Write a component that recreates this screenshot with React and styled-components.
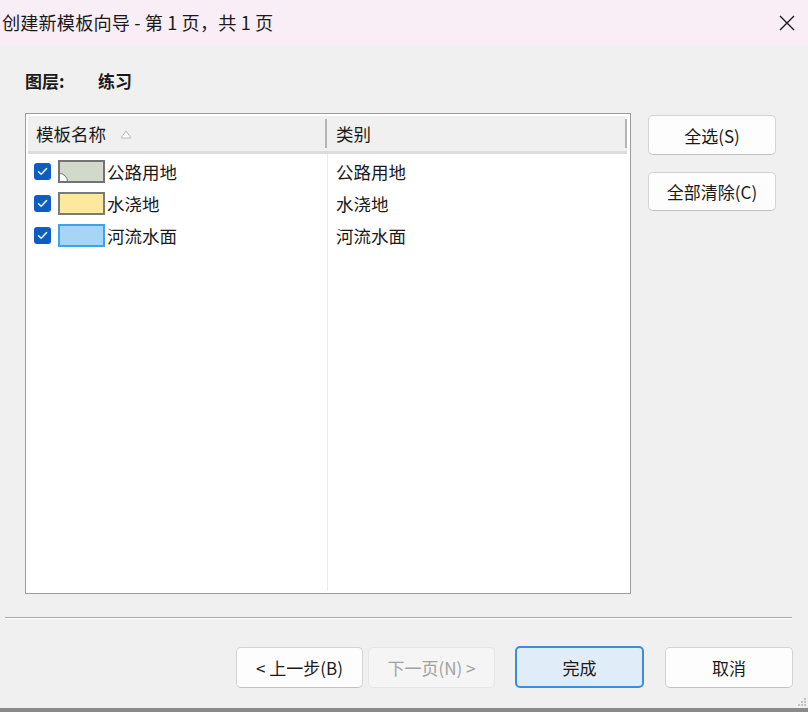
import styled, { createGlobalStyle } from 'styled-components';

const GlobalStyle = createGlobalStyle`
  html, body {
    margin: 0;
    padding: 0;
    width: 808px;
    height: 712px;
    overflow: hidden;
    background: #f0f0f0;
  }
  * {
    box-sizing: border-box;
  }
`;

const FONT = `"Noto Sans CJK SC", "Noto Sans", "Liberation Sans", sans-serif`;

const Window = styled.div`
  width: 808px;
  height: 712px;
  display: flex;
  flex-direction: column;
  background: #f0f0f0;
  font-family: ${FONT};
  color: #1a1a1a;
  border-bottom: 4px solid #8a8a8a;
  position: relative;
`;

const TitleBar = styled.div`
  height: 45px;
  flex: none;
  display: flex;
  align-items: center;
  justify-content: space-between;
  background: #f9eef6;
  padding: 0 12px 2px 2px;
`;

const Title = styled.div`
  font-size: 18.2px;
  letter-spacing: 0.1px;
`;

const CloseIcon = styled.svg`
  width: 18px;
  height: 18px;
  margin-top: 2px;
`;

const Body = styled.div`
  flex: 1;
  display: flex;
  flex-direction: column;
  padding: 22px 0 0 25px;
`;

const LayerRow = styled.div`
  display: flex;
  align-items: center;
  height: 26px;
  font-size: 17px;
  font-weight: 700;
`;

const LayerLabel = styled.span`
  width: 73px;
`;

const Main = styled.div`
  display: flex;
  margin-top: 20px;
  gap: 17px;
`;

const ListBox = styled.div`
  width: 606px;
  height: 481px;
  border: 1px solid #9c9c9c;
  box-shadow: inset 0 0 0 1px #ffffff;
  background: #ffffff;
  display: flex;
  flex-direction: column;
  padding: 2px 3px 2px 2px;
`;

const Header = styled.div`
  display: grid;
  grid-template-columns: 299px 1fr;
  height: 38px;
  flex: none;
  background: #f0f0f0;
  border-bottom: 3px solid #dcdcdc;
  font-size: 17.5px;
`;

const HeaderCell = styled.div`
  display: flex;
  align-items: center;
  padding-left: ${p => (p.$first ? '8px' : '9px')};
  border-right: 2px solid #b4b4b4;
  margin: 3px 0;
  gap: 14px;
`;

const SortMark = styled.svg`
  width: 12px;
  height: 9px;
  margin-top: 1px;
`;

const Rows = styled.div`
  flex: 1;
  display: grid;
  grid-template-columns: 299px 1fr;
  align-content: start;
  padding-top: 1px;
  background: linear-gradient(to right, transparent 299px, #e6edf7 299px, #e6edf7 300px, transparent 300px);
`;

const Cell = styled.div`
  height: 32px;
  display: flex;
  align-items: center;
  font-size: 17.5px;
  padding-left: ${p => (p.$first ? '6px' : '9px')};
`;

const Check = styled.span`
  width: 17px;
  height: 17px;
  border-radius: 3px;
  background: #0c5ec4;
  display: inline-flex;
  align-items: center;
  justify-content: center;
  margin-right: 7px;
  flex: none;
`;

const Swatch = styled.span`
  width: 47px;
  height: 23px;
  flex: none;
  border: 2px solid ${p => p.$border};
  background: ${p => p.$fill};
  margin-right: 2px;
  position: relative;
  overflow: hidden;
`;

const SwatchNotch = styled.span`
  position: absolute;
  left: -9px;
  bottom: -9px;
  width: 17px;
  height: 17px;
  border-radius: 50%;
  background: #ffffff;
  border: 1.5px solid #737373;
`;

const SideButtons = styled.div`
  display: flex;
  flex-direction: column;
  gap: 17px;
  padding-top: 2px;
`;

const Button = styled.button`
  width: ${p => p.$w || 128}px;
  height: ${p => p.$h || 40}px;
  font-family: ${FONT};
  font-size: 17px;
  color: ${p => (p.$disabled ? '#a2a2a2' : '#1a1a1a')};
  background: ${p => (p.$primary ? '#e0ecf8' : p.$disabled ? '#f5f5f5' : '#fdfdfd')};
  border: ${p => (p.$primary ? '2px solid #3a8edc' : p.$disabled ? '1px solid #e6e6e6' : '1px solid #d3d3d3')};
  border-bottom-color: ${p => (p.$primary ? '#3a8edc' : p.$disabled ? '#e6e6e6' : '#c2c2c2')};
  border-radius: 5px;
  padding: 0;
  display: flex;
  align-items: center;
  justify-content: center;
`;

const Separator = styled.div`
  margin: 23px 16px 0 -20px;
  height: 2px;
  border-top: 1px solid #a9a9a9;
  border-bottom: 1px solid #ffffff;
`;

const Footer = styled.div`
  display: flex;
  align-items: center;
  padding: 27px 0 0 211px;
`;

const Grip = styled.svg`
  position: absolute;
  right: 1px;
  bottom: 1px;
  width: 12px;
  height: 12px;
`;

const rows = [
  { name: '公路用地', fill: '#d2d9cb', border: '#737373', notch: true },
  { name: '水浇地', fill: '#fde89f', border: '#7a7a7a' },
  { name: '河流水面', fill: '#a6d5f5', border: '#3fa3e8' },
];

function CheckMark() {
  return (
    <svg width="11" height="9" viewBox="0 0 11 9">
      <path d="M1.5 4.8 L4.2 7.3 L9.6 1.6" stroke="#ffffff" strokeWidth="1.4" fill="none" strokeLinecap="round" strokeLinejoin="round" />
    </svg>
  );
}

export default function App() {
  return (
    <>
      <GlobalStyle />
      <Window>
        <TitleBar>
          <Title>创建新模板向导 - 第 1 页，共 1 页</Title>
          <CloseIcon viewBox="0 0 18 18">
            <path d="M2 2 L16 16 M16 2 L2 16" stroke="#1a1a1a" strokeWidth="1.4" fill="none" />
          </CloseIcon>
        </TitleBar>
        <Body>
          <LayerRow>
            <LayerLabel>图层:</LayerLabel>
            <span>练习</span>
          </LayerRow>
          <Main>
            <ListBox>
              <Header>
                <HeaderCell $first>
                  模板名称
                  <SortMark viewBox="0 0 12 9">
                    <path d="M1 8 L6 1 L11 8 Z" stroke="#b8b8b8" strokeWidth="1" fill="#ffffff" />
                  </SortMark>
                </HeaderCell>
                <HeaderCell>类别</HeaderCell>
              </Header>
              <Rows>
                {rows.map(r => [
                  <Cell $first key={r.name + 'a'}>
                    <Check>
                      <CheckMark />
                    </Check>
                    <Swatch $fill={r.fill} $border={r.border}>
                      {r.notch && <SwatchNotch />}
                    </Swatch>
                    {r.name}
                  </Cell>,
                  <Cell key={r.name + 'b'}>{r.name}</Cell>,
                ])}
              </Rows>
            </ListBox>
            <SideButtons>
              <Button>全选(S)</Button>
              <Button $h={39}>全部清除(C)</Button>
            </SideButtons>
          </Main>
          <Separator />
          <Footer>
            <Button $w={127} $h={41}>&lt; 上一步(B)</Button>
            <Button $w={127} $h={41} $disabled style={{ marginLeft: 5 }}>下一页(N) &gt;</Button>
            <Button $w={129} $h={42} $primary style={{ marginLeft: 20 }}>完成</Button>
            <Button $w={128} $h={41} style={{ marginLeft: 21 }}>取消</Button>
          </Footer>
        </Body>
        <Grip viewBox="0 0 12 12">
          {[[9, 3], [6, 6], [9, 6], [3, 9], [6, 9], [9, 9]].map(([x, y]) => (
            <rect key={x + '-' + y} x={x} y={y} width="2" height="2" fill="#c4c4c4" />
          ))}
        </Grip>
      </Window>
    </>
  );
}
